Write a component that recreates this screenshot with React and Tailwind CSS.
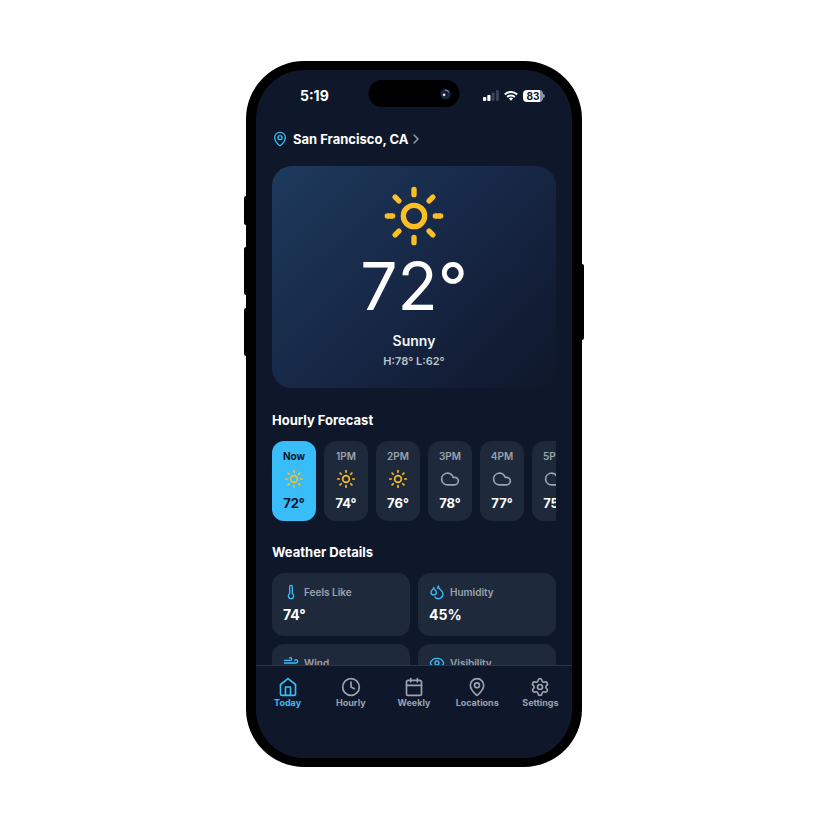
import React, { useState } from 'react';
import {
  Calendar,
  ChevronRight,
  Clock,
  Cloud,
  Droplets,
  Eye,
  MapPin,
  Settings,
  Sun,
  Thermometer,
  Wind
} from 'lucide-react';

const HomeIcon = ({ className }) => (
  <svg
    className={className}
    viewBox="0 0 24 24"
    fill="none"
    stroke="currentColor"
    strokeWidth="2"
    strokeLinecap="round"
    strokeLinejoin="round"
  >
    <path d="m3 9 9-7 9 7v11a2 2 0 0 1-2 2H5a2 2 0 0 1-2-2z" />
    <path d="M9 22V12h6v10" />
  </svg>
);

const hours = [
  { time: 'Now', temp: '72°', icon: Sun, color: 'text-[#fbbf24]' },
  { time: '1PM', temp: '74°', icon: Sun, color: 'text-[#fbbf24]' },
  { time: '2PM', temp: '76°', icon: Sun, color: 'text-[#fbbf24]' },
  { time: '3PM', temp: '78°', icon: Cloud, color: 'text-[#9ca3af]' },
  { time: '4PM', temp: '77°', icon: Cloud, color: 'text-[#9ca3af]' },
  { time: '5PM', temp: '75°', icon: Cloud, color: 'text-[#9ca3af]' }
];

const details = [
  { label: 'Feels Like', value: '74°', icon: Thermometer },
  { label: 'Humidity', value: '45%', icon: Droplets },
  { label: 'Wind', value: '8 mph', icon: Wind },
  { label: 'Visibility', value: '10 mi', icon: Eye }
];

const tabs = [
  { id: 'today', label: 'Today', icon: HomeIcon },
  { id: 'hourly', label: 'Hourly', icon: Clock },
  { id: 'weekly', label: 'Weekly', icon: Calendar },
  { id: 'locations', label: 'Locations', icon: MapPin },
  { id: 'settings', label: 'Settings', icon: Settings }
];

const StatusBar = () => (
  <div className="relative flex h-[51px] items-center justify-between pl-11 pr-[27px] text-white">
    <span className="text-sm font-bold">5:19</span>

    {/* Dynamic island */}
    <div className="absolute left-1/2 top-[10px] flex h-[27px] w-[91px] -translate-x-1/2 items-center justify-end rounded-full bg-black pr-2">
      <svg className="h-3 w-3" viewBox="0 0 12 12">
        <circle cx="6" cy="6" r="6" fill="#0b1120" />
        <circle cx="6" cy="6" r="4.6" fill="#1d2b47" />
        <circle cx="6" cy="6" r="2.6" fill="#111b30" />
        <path d="M5.4 2.2A3.8 3.8 0 0 1 9.4 4.6" stroke="#7486a8" strokeWidth="1.2" fill="none" />
        <circle cx="4.6" cy="6.8" r="1.4" fill="#d5e0f0" />
      </svg>
    </div>

    <div className="flex items-center gap-[5px]">
      <svg className="h-[11px] w-4" viewBox="0 0 16 11">
        <rect x="0" y="7" width="3.2" height="4" rx="0.8" fill="#fff" />
        <rect x="4.3" y="5" width="3.2" height="6" rx="0.8" fill="#fff" />
        <rect x="8.6" y="2.5" width="3" height="8.5" rx="0.8" fill="#3a4356" />
        <rect x="12.9" y="0" width="3" height="11" rx="0.8" fill="#3a4356" />
      </svg>
      <svg className="h-[11px] w-[14px]" viewBox="0 0 15 11" fill="none" stroke="#fff" strokeWidth="2.2">
        <path d="M0.9 4.4a9.4 9.4 0 0 1 13.2 0" />
        <path d="M3.4 7.1a5.8 5.8 0 0 1 8.2 0" />
        <path d="M7.5 11 5.3 8.7a3.1 3.1 0 0 1 4.4 0z" fill="#fff" stroke="none" />
      </svg>
      <div className="flex items-center">
        <div className="flex h-3 w-5 items-center justify-center rounded bg-linear-to-r from-white from-85% to-[#8b919d] to-85% text-[10px] font-bold leading-3 text-slate-900">
          83
        </div>
        <div className="h-1 w-0.5 rounded-r bg-[#8b919d]" />
      </div>
    </div>
  </div>
);

const CurrentWeather = () => (
  <section className="flex flex-col items-center rounded-[20px] bg-linear-135 from-[#1d3a5c] via-[#172746] to-[#0f172a] pb-[17px] pt-[18px]">
    <Sun className="h-16 w-16 text-[#fbbf24]" />
    <p className="text-[66px] font-normal leading-[77px] text-white">72°</p>
    <p className="mt-[6px] text-sm font-semibold leading-5 text-[#f1f3f6]">Sunny</p>
    <p className="text-[11px] font-semibold leading-5 text-[#bcc3ce]">H:78° L:62°</p>
  </section>
);

const HourlyForecast = () => {
  const [selected, setSelected] = useState('Now');

  return (
    <section className="mt-[22px]">
      <h2 className="text-[13px] font-bold leading-5 text-white">Hourly Forecast</h2>
      <div className="mt-[11px] flex gap-2 overflow-x-auto [scrollbar-width:none]">
        {hours.map(({ time, temp, icon: Icon, color }) => {
          const active = selected === time;
          return (
            <button
              key={time}
              onClick={() => setSelected(time)}
              className={`flex h-20 w-11 shrink-0 flex-col items-center justify-between rounded-xl pb-2 pt-[7px] ${
                active ? 'bg-[#38bdf8] text-[#0f172a]' : 'bg-[#1e293b] text-white'
              }`}
            >
              <span
                className={`text-[10px] leading-4 ${
                  active ? 'font-bold' : 'font-semibold text-[#9ca3af]'
                }`}
              >
                {time}
              </span>
              <Icon className={`h-5 w-5 ${color}`} />
              <span className="text-[13px] font-bold leading-5">{temp}</span>
            </button>
          );
        })}
      </div>
    </section>
  );
};

const WeatherDetails = () => (
  <section className="mt-[21px]">
    <h2 className="text-[13px] font-bold leading-5 text-white">Weather Details</h2>
    <div className="mt-[11px] grid grid-cols-2 gap-2">
      {details.map(({ label, value, icon: Icon }) => (
        <div key={label} className="rounded-xl bg-[#1e293b] p-[11px]">
          <div className="flex items-center gap-[5px]">
            <Icon className="h-4 w-4 text-[#38bdf8]" />
            <span className="text-[10px] font-semibold leading-4 text-[#9ca3af]">{label}</span>
          </div>
          <p className="mt-[5px] text-sm font-bold leading-5 text-white">{value}</p>
        </div>
      ))}
    </div>
  </section>
);

const TabBar = () => {
  const [activeTab, setActiveTab] = useState('today');

  return (
    <nav className="grid h-[93px] shrink-0 grid-cols-5 items-start border-t border-[#2b3648] bg-[#0f172a] pt-[11px]">
      {tabs.map(({ id, label, icon: Icon }) => (
        <button
          key={id}
          onClick={() => setActiveTab(id)}
          className={`flex flex-col items-center text-[9px] font-bold leading-3 ${
            activeTab === id ? 'text-[#38bdf8]' : 'text-[#9ca3af]'
          }`}
        >
          <Icon className="h-5 w-5" />
          <span>{label}</span>
        </button>
      ))}
    </nav>
  );
};

const App = () => {
  return (
    <div className="flex min-h-screen items-center justify-center bg-white font-[Inter,sans-serif]">
      <div className="relative w-full max-w-[336px]">
        {/* Side buttons */}
        <div className="absolute -left-[2px] top-[135px] h-[29px] w-1 rounded-l-xs bg-black" />
        <div className="absolute -left-[2px] top-[186px] h-12 w-1 rounded-l-xs bg-black" />
        <div className="absolute -left-[2px] top-[247px] h-12 w-1 rounded-l-xs bg-black" />
        <div className="absolute -right-[2px] top-[203px] h-[76px] w-1 rounded-r-xs bg-black" />

        <div className="relative flex h-[706px] flex-col overflow-hidden rounded-[58px] border-x-10 border-y-9 border-black bg-[#0f172a]">
          <StatusBar />

          <main className="min-h-0 flex-1 overflow-hidden px-4 pt-2">
            <button className="mb-[17px] flex items-center text-[13px] font-bold leading-5 text-white">
              <MapPin className="mr-[5px] h-4 w-4 text-[#38bdf8]" />
              <span>San Francisco, CA</span>
              <ChevronRight className="h-4 w-4 text-[#9ca3af]" />
            </button>
            <CurrentWeather />
            <HourlyForecast />
            <WeatherDetails />
          </main>

          <TabBar />
        </div>
      </div>
    </div>
  );
};

export default App;
